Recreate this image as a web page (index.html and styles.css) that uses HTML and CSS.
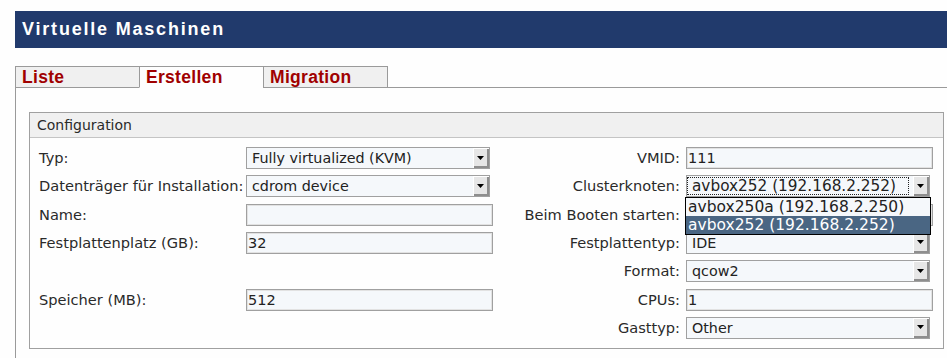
FILE: index.html
```html
<!DOCTYPE html>
<html lang="de">
<head>
    <meta charset="UTF-8">
    <meta name="viewport" content="width=device-width, initial-scale=1.0">
    <title>Virtuelle Maschinen</title>
    <link rel="stylesheet" href="styles.css">
</head>
<body>

<div class="page">
    <div class="titlebar">Virtuelle Maschinen</div>

    <div class="tabs">
        <div class="tab">Liste</div>
        <div class="tab active">Erstellen</div>
        <div class="tab">Migration</div>
    </div>

    <div class="panel">
        <div class="fieldset">
            <div class="legend">Configuration</div>
            <div class="fields">
                <!-- linke Spalte -->
                <div class="col col-left">
                    <label>Typ:</label>
                    <div class="select">
                        <span class="value">Fully virtualized (KVM)</span>
                        <span class="arrow"><svg width="7" height="4" viewBox="0 0 7 4"><path d="M0 0h7L3.5 4z"/></svg></span>
                    </div>

                    <label>Datenträger für Installation:</label>
                    <div class="select">
                        <span class="value">cdrom device</span>
                        <span class="arrow"><svg width="7" height="4" viewBox="0 0 7 4"><path d="M0 0h7L3.5 4z"/></svg></span>
                    </div>

                    <label>Name:</label>
                    <input type="text" class="text" value="">

                    <label>Festplattenplatz (GB):</label>
                    <input type="text" class="text" value="32">

                    <div></div>
                    <div></div>

                    <label>Speicher (MB):</label>
                    <input type="text" class="text" value="512">
                </div>

                <!-- rechte Spalte -->
                <div class="col col-right">
                    <label>VMID:</label>
                    <input type="text" class="text" value="111">

                    <label>Clusterknoten:</label>
                    <div class="select focus">
                        <span class="value">avbox252 (192.168.2.252)</span>
                        <span class="arrow"><svg width="7" height="4" viewBox="0 0 7 4"><path d="M0 0h7L3.5 4z"/></svg></span>
                        <div class="dropdown">
                            <div class="option">avbox250a (192.168.2.250)</div>
                            <div class="option selected">avbox252 (192.168.2.252)</div>
                        </div>
                    </div>

                    <label>Beim Booten starten:</label>
                    <input type="text" class="text" value="">

                    <label>Festplattentyp:</label>
                    <div class="select">
                        <span class="value">IDE</span>
                        <span class="arrow"><svg width="7" height="4" viewBox="0 0 7 4"><path d="M0 0h7L3.5 4z"/></svg></span>
                    </div>

                    <label>Format:</label>
                    <div class="select">
                        <span class="value">qcow2</span>
                        <span class="arrow"><svg width="7" height="4" viewBox="0 0 7 4"><path d="M0 0h7L3.5 4z"/></svg></span>
                    </div>

                    <label>CPUs:</label>
                    <input type="text" class="text" value="1">

                    <label>Gasttyp:</label>
                    <div class="select">
                        <span class="value">Other</span>
                        <span class="arrow"><svg width="7" height="4" viewBox="0 0 7 4"><path d="M0 0h7L3.5 4z"/></svg></span>
                    </div>
                </div>
            </div>
        </div>
    </div>
</div>

</body>
</html>
```

FILE: styles.css
```css
body {
    margin: 0;
    padding: 0;
    background: #fefefe;
    font-family: 'DejaVu Sans', Verdana, sans-serif;
    color: #2a2a2a;
    overflow: hidden;
}
.page {
    padding: 11px 0 0 15px;
}
.titlebar {
    height: 37px;
    line-height: 37px;
    padding-left: 7px;
    background-color: #213a6c;
    color: #fff;
    font-family: 'Liberation Sans', Arial, sans-serif;
    font-weight: bold;
    font-size: 18px;
    letter-spacing: 1.8px;
}
.tabs {
    display: flex;
    margin-top: 18px;
    margin-bottom: -1px;
    position: relative;
    z-index: 1;
}
.tab {
    width: 125px;
    height: 22px;
    box-sizing: border-box;
    margin-right: -1px;
    padding-left: 6px;
    line-height: 20px;
    border: 1px solid #9a9a9a;
    background-color: #f0f0f0;
    color: #a00000;
    font-family: 'Liberation Sans', Arial, sans-serif;
    font-weight: bold;
    font-size: 17.5px;
    letter-spacing: 0.3px;
}
.tab.active {
    background-color: #fefefe;
    border-bottom-color: #fefefe;
}
.panel {
    border-left: 1px solid #9a9a9a;
    border-top: 1px solid #9a9a9a;
    padding: 24px 3px 20px 13px;
}
.fieldset {
    border: 1px solid #a0a0a0;
}
.legend {
    height: 24px;
    line-height: 24px;
    padding-left: 7px;
    background-color: #f0f0f0;
    border-bottom: 1px solid #c4c4c4;
    font-size: 14px;
}
.fields {
    display: flex;
    padding: 9px 0 9px 9px;
}
.col {
    display: grid;
    grid-auto-rows: 22px;
    row-gap: 6.33px;
    align-content: start;
}
.col-left {
    grid-template-columns: 207px 247px;
}
.col-right {
    grid-template-columns: 187px 247px;
    column-gap: 6px;
}
.col label {
    line-height: 22px;
    font-size: 14.6px;
    white-space: nowrap;
}
.col-right label {
    text-align: right;
}
input.text {
    width: 247px;
    height: 22px;
    box-sizing: border-box;
    margin: 0;
    padding: 0 1px;
    border: 1px solid #a0a0a0;
    box-shadow: inset 0 0 0 1px #e2e2e2;
    background-color: #f5f8fb;
    font-family: 'DejaVu Sans', Verdana, sans-serif;
    font-size: 14.5px;
    color: #222;
    outline: none;
}
.select {
    position: relative;
    display: flex;
    align-items: center;
    width: 244px;
    height: 22px;
    box-sizing: border-box;
    border: 1px solid #a0a0a0;
    background-color: #f5f8fb;
    font-size: 14.3px;
    color: #222;
}
.select .value {
    flex: 1;
    padding-left: 5px;
    white-space: nowrap;
    overflow: hidden;
}
.select .arrow {
    display: flex;
    align-items: center;
    justify-content: center;
    width: 16px;
    height: 20px;
    box-sizing: border-box;
    background-color: #e6e6e6;
    box-shadow: inset 1px 1px 0 #fff, inset -2px -2px 0 #8e8e8e;
}
.select .arrow svg {
    fill: #000;
    margin: -1px 1px 0 0;
}
.select.focus .value {
    margin: 2px 5px 2px 1px;
    padding-left: 4px;
    line-height: 16px;
    outline: 1px dotted #222;
    font-size: 15.3px;
}
.dropdown {
    position: absolute;
    top: calc(100% + 1px);
    left: -2px;
    width: 246px;
    box-sizing: border-box;
    border: 1px solid #000;
    background-color: #f5f8fb;
    z-index: 10;
}
.option {
    height: 18px;
    line-height: 18px;
    padding-left: 2px;
    font-size: 15.5px;
    white-space: nowrap;
}
.option.selected {
    background-color: #4a6683;
    color: #fff;
}
```
